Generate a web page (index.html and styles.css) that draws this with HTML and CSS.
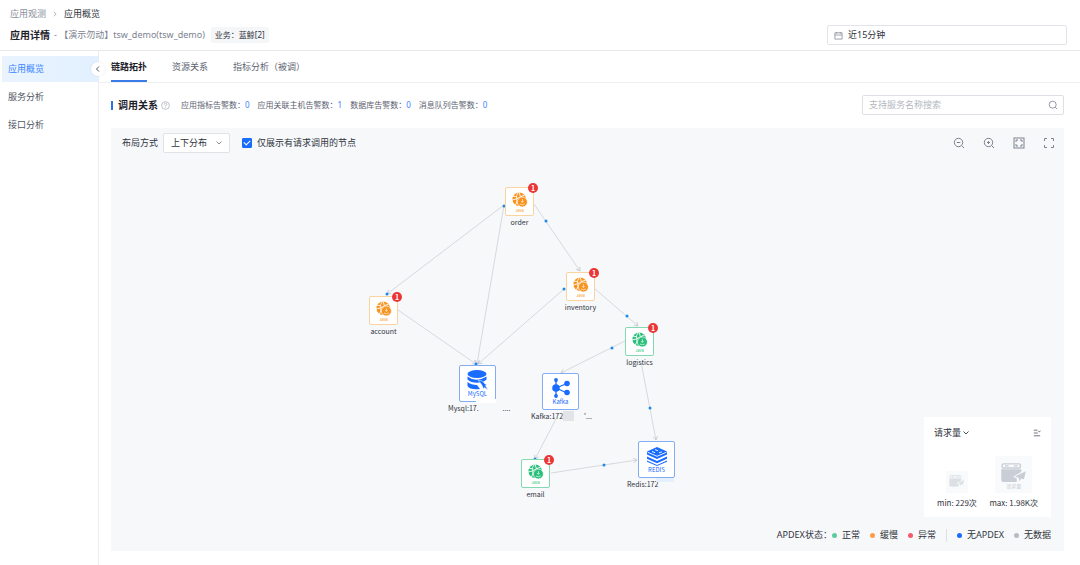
FILE: index.html
```html
<!DOCTYPE html>
<html lang="zh-CN">

<head>
    <meta charset="UTF-8">
    <title>应用概览</title>
    <link rel="stylesheet" href="styles.css">
</head>

<body>
    <!-- shared icons -->
    <svg class="sprite" aria-hidden="true">
        <symbol id="chevron" viewBox="0 0 8 8">
            <path d="M1.5 2.5 4 5 6.5 2.5" fill="none" stroke="currentColor" stroke-width=".9" />
        </symbol>
        <symbol id="service" viewBox="0 0 20 20">
            <circle cx="9" cy="9" r="8.500" fill="currentColor" />
            <path d="M8 .5Q4.500 4 6 8.500L0 10M6 8.500Q7 12 4 17M6 8.500 10.500 6 16 3.500M10.500 6 9 .5M1 5l4.500 1" fill="none" stroke="#fff" stroke-width="1.100" />
            <circle cx="13" cy="12.500" r="6.300" fill="currentColor" stroke="#fff" stroke-width=".9" />
            <path d="M13 9v4M11.500 11.500 13 13l1.500-1.500M10 15q3 1.800 6 0" fill="none" stroke="#fff" stroke-width=".8" />
        </symbol>
        <symbol id="window" viewBox="0 0 28 22">
            <rect x="1" y="1" width="20" height="4.500" rx="1" fill="none" stroke="currentColor" stroke-width="1.500" />
            <path d="M4 3.200h4M14 3.200h4" stroke="currentColor" stroke-width="1.500" />
            <path d="M0 7h22v3l-9 5 4 2v4H2q-2 0-2-2z" fill="currentColor" />
            <path d="M27 9 15 15l4 1 1 4 2-3 3 1z" fill="currentColor" />
        </symbol>
    </svg>

    <header class="header">
        <div class="header-left">
            <nav class="breadcrumb">
                <a href="#">应用观测</a>
                <svg class="crumb-arrow" viewBox="0 0 8 8"><path d="M2.500 1 5.500 4 2.500 7" /></svg>
                <span class="current">应用概览</span>
            </nav>
            <div class="title-row">
                <h1>应用详情</h1>
                <span class="app-name">- 【演示勿动】tsw_demo(tsw_demo)</span>
                <span class="tag">业务：蓝鲸[2]</span>
            </div>
        </div>
        <label class="time-picker">
            <svg viewBox="0 0 10 10"><path d="M1 2h8v7H1zM1 4.500h8M3 1v2M7 1v2" /></svg>
            <input type="text" value="近15分钟" aria-label="时间范围" readonly>
        </label>
    </header>

    <div class="body">
        <aside class="sidebar">
            <a class="active" href="#">应用概览</a>
            <a href="#">服务分析</a>
            <a href="#">接口分析</a>
            <button class="collapse" aria-label="收起菜单">
                <svg viewBox="0 0 8 8"><path d="M5 1.500 2.500 4 5 6.500" /></svg>
            </button>
        </aside>

        <main class="main">
            <nav class="tabs">
                <a class="active" href="#">链路拓扑</a>
                <a href="#">资源关系</a>
                <a href="#">指标分析（被调）</a>
            </nav>

            <section class="content">
                <div class="section-head">
                    <h2>调用关系</h2>
                    <svg class="help" viewBox="0 0 10 10">
                        <circle cx="5" cy="5" r="4.300" />
                        <path d="M3.600 4q0-1.500 1.400-1.500T6.400 4Q6.400 4.800 5 5.300V6M5 6.800v.8" />
                    </svg>
                    <ul class="alerts">
                        <li>应用指标告警数：<a href="#">0</a></li>
                        <li>应用关联主机告警数：<a href="#">1</a></li>
                        <li>数据库告警数：<a href="#">0</a></li>
                        <li>消息队列告警数：<a href="#">0</a></li>
                    </ul>
                    <label class="search">
                        <input type="search" placeholder="支持服务名称搜索" aria-label="搜索服务">
                        <svg viewBox="0 0 10 10"><circle cx="4.700" cy="4.700" r="3.500" /><path d="M7.300 7.300 9 9" /></svg>
                    </label>
                </div>

                <div class="canvas">
                    <div class="toolbar">
                        <label for="layout">布局方式</label>
                        <span class="select">
                            <select id="layout">
                                <option>上下分布</option>
                                <option>左右分布</option>
                            </select>
                            <svg><use href="#chevron" /></svg>
                        </span>
                        <label class="check">
                            <input type="checkbox" checked>
                            仅展示有请求调用的节点
                        </label>
                        <div class="tools">
                            <button aria-label="缩小"><svg viewBox="0 0 12 12"><circle cx="5.500" cy="5.500" r="4.200" /><path d="M8.700 8.700 11 11M3.700 5.500h3.600" /></svg></button>
                            <button aria-label="放大"><svg viewBox="0 0 12 12"><circle cx="5.500" cy="5.500" r="4.200" /><path d="M8.700 8.700 11 11M4 5.500h3M5.500 4v3" /></svg></button>
                            <button aria-label="适应画布"><svg viewBox="0 0 12 12"><rect x="1" y="1" width="10" height="10" /><path d="M3 5V3h2M7 3h2v2M9 7v2H7M5 9H3V7" /></svg></button>
                            <button aria-label="全屏"><svg viewBox="0 0 12 12"><path d="M1.500 4V1.500H4M8 1.500h2.500V4M10.500 8v2.500H8M4 10.500H1.500V8" /></svg></button>
                        </div>
                    </div>

                    <div class="graph">
                        <svg class="edges" viewBox="0 0 600 400">
                            <defs>
                                <marker id="arrow" viewBox="0 0 6 6" refX="5" refY="3" markerWidth="6" markerHeight="6" orient="auto">
                                    <path d="M1 .5 5 3 1 5.500" fill="none" stroke="#bfc4cc" stroke-width=".8" />
                                </marker>
                            </defs>
                            <g class="lines">
                                <path d="M393 77 276 166" />
                                <path d="M393 77 366 236" />
                                <path d="M423 76 469 143" />
                                <path d="M453 161 367 236" />
                                <path d="M287 182 365 236" />
                                <path d="M484 161 527 198" />
                                <path d="M514 213 450 245" />
                                <path d="M530 234 545 312" />
                                <path d="M445 291 424 331" />
                                <path d="M440 345 526 332" />
                            </g>
                            <g class="dots">
                                <circle cx="393" cy="78" r="1.500" />
                                <circle cx="435" cy="93" r="1.500" />
                                <circle cx="453" cy="161" r="1.500" />
                                <circle cx="276" cy="166" r="1.500" />
                                <circle cx="516" cy="188" r="1.500" />
                                <circle cx="501" cy="220" r="1.500" />
                                <circle cx="365" cy="236" r="1.500" />
                                <circle cx="539" cy="280" r="1.500" />
                                <circle cx="424" cy="331" r="1.500" />
                                <circle cx="493" cy="337" r="1.500" />
                            </g>
                        </svg>

                        <div class="node slow order">
                            <div class="box"><svg><use href="#service" /></svg><small>Java</small><b>1</b></div>
                            <span>order</span>
                        </div>
                        <div class="node slow inventory">
                            <div class="box"><svg><use href="#service" /></svg><small>Java</small><b>1</b></div>
                            <span>inventory</span>
                        </div>
                        <div class="node slow account">
                            <div class="box"><svg><use href="#service" /></svg><small>Java</small><b>1</b></div>
                            <span>account</span>
                        </div>
                        <div class="node normal logistics">
                            <div class="box"><svg><use href="#service" /></svg><small>Java</small><b>1</b></div>
                            <span>logistics</span>
                        </div>
                        <div class="node normal email">
                            <div class="box"><svg><use href="#service" /></svg><small>Java</small><b>1</b></div>
                            <span>email</span>
                        </div>
                        <div class="node large mysql">
                            <div class="box">
                                <svg viewBox="0 0 22 20">
                                    <ellipse cx="10" cy="4" rx="9.500" ry="4" fill="currentColor" />
                                    <path d="M.5 6.500Q5 10 10 9.700T19.500 6.500v3q-3.500 3.200-9.500 3.200T.5 9.500zM.5 12q3.500 3 9.500 3l3 4q-10 1-12.500-3z" fill="currentColor" />
                                    <path d="M11 10q5 0 7 4l2 .5-1.500 1L21 20l-3.500-2.500-1 1.500q-1-4-5.500-9z" fill="currentColor" stroke="#fff" stroke-width=".5" />
                                </svg>
                                <small>MySQL</small>
                            </div>
                            <span>Mysql:17. <i class="rest">....</i></span>
                        </div>
                        <div class="node large kafka">
                            <div class="box">
                                <svg viewBox="0 0 22 20">
                                    <path d="M6 3v14M6 10l11-4.500M6 10l11 5" stroke="currentColor" stroke-width="1.300" />
                                    <g fill="currentColor">
                                        <circle cx="6" cy="10" r="3.800" />
                                        <circle cx="6" cy="2" r="1.900" />
                                        <circle cx="6" cy="18" r="1.900" />
                                        <circle cx="17" cy="5.500" r="2.800" />
                                        <circle cx="17" cy="14.500" r="2.800" />
                                    </g>
                                </svg>
                                <small>Kafka</small>
                            </div>
                            <span>Kafka:172<i class="mask"></i><i class="rest">'...</i></span>
                        </div>
                        <div class="node large redis">
                            <div class="box">
                                <svg viewBox="0 0 22 20">
                                    <path d="M1 5.500 11 1l10 4.500v3L11 13 1 8.500z" fill="currentColor" />
                                    <path d="M1 10.500 11 15l10-4.500v2.300L11 17.300 1 12.800zM1 14.500 11 19l10-4.500v1.300l-10 4.200-10-4.200z" fill="currentColor" />
                                    <path d="M1.500 6.200 11 10.300l9.500-4.100M6 5.500l3 1.200M9 3.700l3 1M13 6.800l3-1" fill="none" stroke="#fff" stroke-width=".9" />
                                </svg>
                                <small>REDIS</small>
                            </div>
                            <span>Redis:172</span>
                        </div>
                    </div>

                    <div class="canvas-foot">
                        <div class="size-panel">
                            <div class="panel-head">
                                <span class="metric">
                                    <select aria-label="指标">
                                        <option>请求量</option>
                                    </select>
                                    <svg><use href="#chevron" /></svg>
                                </span>
                                <button aria-label="收起图例"><svg viewBox="0 0 10 10"><path d="M1 1.500h4.500M1 5h5M1 8.500h8M6.500 2.500l1.300 1.300L9.500 2" /></svg></button>
                            </div>
                            <div class="sizes">
                                <div class="size">
                                    <div class="thumb small"><svg><use href="#window" /></svg></div>
                                    <span>min: 229次</span>
                                </div>
                                <div class="size">
                                    <div class="thumb"><svg><use href="#window" /></svg><small>请求量</small></div>
                                    <span>max: 1.98K次</span>
                                </div>
                            </div>
                        </div>
                        <ul class="legend">
                            <li>APDEX状态：</li>
                            <li class="item green">正常</li>
                            <li class="item orange">缓慢</li>
                            <li class="item red">异常</li>
                            <li class="divider"></li>
                            <li class="item blue">无APDEX</li>
                            <li class="item gray">无数据</li>
                        </ul>
                    </div>
                </div>
            </section>
        </main>
    </div>
</body>

</html>
```

FILE: styles.css
```css
* {
    box-sizing: border-box;
}

body {
    margin: 0;
    min-height: 100vh;
    display: flex;
    flex-direction: column;
    background: #fff;
    color: #30343d;
    font-family: "Noto Sans", "Noto Sans CJK SC", sans-serif;
    font-size: 9px;
    line-height: 14px;
}

a {
    color: inherit;
    text-decoration: none;
}

h1, h2, ul {
    margin: 0;
    padding: 0;
    list-style: none;
}

button, input, select {
    margin: 0;
    padding: 0;
    border: none;
    background: none;
    color: inherit;
    font: inherit;
    outline: none;
    appearance: none;
}

svg {
    display: block;
    flex: none;
}

.sprite {
    position: absolute;
    width: 0;
    height: 0;
}

/* header */
.header {
    display: flex;
    justify-content: space-between;
    align-items: flex-end;
    padding: 7px 13px 5px 10px;
    border-bottom: 1px solid #e6e8ec;
}

.header-left {
    padding-bottom: 2px;
}

.breadcrumb, .title-row {
    display: flex;
    align-items: center;
}

.breadcrumb {
    gap: 6px;
    color: #8a909c;
}

.breadcrumb .current {
    color: #30343d;
}

.crumb-arrow {
    width: 6px;
    height: 6px;
    fill: none;
    stroke: #9aa0aa;
}

.title-row {
    margin-top: 6px;
    gap: 4px;
    height: 16px;
}

h1, h2 {
    font-size: 10px;
    font-weight: 600;
    color: #1c2029;
}

.app-name {
    color: #7c828f;
}

.tag {
    margin-left: 2px;
    padding: 0 4px;
    font-size: 8px;
    line-height: 16px;
    border-radius: 2px;
    background: #f5f6f8;
}

.time-picker {
    display: flex;
    align-items: center;
    gap: 5px;
    width: 240px;
    height: 20px;
    padding: 0 6px;
    border: 1px solid #e2e4e9;
    border-radius: 2px;
}

.time-picker svg {
    width: 9px;
    height: 9px;
    fill: none;
    stroke: #7c828f;
    stroke-width: .8;
}

.time-picker input {
    flex: 1;
    min-width: 0;
}

/* sidebar */
.body {
    flex: 1;
    display: flex;
}

.sidebar {
    position: relative;
    width: 99px;
    padding: 5px 0 0 2px;
    border-right: 1px solid #eaecf0;
}

.sidebar a {
    display: block;
    margin-bottom: 2px;
    padding-left: 6px;
    line-height: 26px;
    color: #4f5563;
}

.sidebar .active {
    background: linear-gradient(90deg, #e9f4ff, #e2f0ff);
    color: #3a84ff;
}

.collapse {
    position: absolute;
    top: 11px;
    right: -7px;
    width: 14px;
    height: 14px;
    padding: 3px;
    border-radius: 50%;
    background: #fff;
    box-shadow: 0 0 2px rgba(0, 0, 0, .1);
}

.collapse svg {
    width: 8px;
    height: 8px;
    fill: none;
    stroke: #4f5563;
}

/* main */
.main {
    flex: 1;
    min-width: 0;
    display: flex;
    flex-direction: column;
}

.tabs {
    display: flex;
    gap: 25px;
    padding: 2px 0 0 12px;
    border-bottom: 1px solid #eef0f3;
    color: #5c6270;
}

.tabs a {
    line-height: 28px;
    border-bottom: 1px solid transparent;
}

.tabs .active {
    color: #1c2029;
    font-weight: 600;
    border-color: #3a7bea;
    box-shadow: inset 0 -1px #3a7bea;
}

.content {
    flex: 1;
    display: flex;
    flex-direction: column;
    padding: 12px 16px 14px 12px;
}

.section-head {
    display: flex;
    align-items: center;
    height: 20px;
    margin-bottom: 13px;
}

.section-head h2 {
    padding-left: 5px;
    line-height: 9px;
    border-left: 2px solid #2c6fe8;
}

.help {
    width: 9px;
    height: 9px;
    margin: 0 11px 0 3px;
    fill: none;
    stroke: #a6abb5;
    stroke-width: .8;
}

.alerts {
    display: flex;
    gap: 8px;
    font-size: 8px;
    color: #5c6270;
}

.alerts a {
    color: #3a84ff;
}

.search {
    display: flex;
    align-items: center;
    width: 202px;
    height: 20px;
    margin-left: auto;
    padding: 0 5px 0 6px;
    border: 1px solid #dcdfe5;
    border-radius: 2px;
}

.search input {
    flex: 1;
    min-width: 0;
}

.search input::placeholder {
    color: #b4b8c0;
}

.search svg {
    width: 10px;
    height: 10px;
    fill: none;
    stroke: #7c828f;
    stroke-width: .8;
}

/* topology canvas */
.canvas {
    flex: 1;
    position: relative;
    display: flex;
    flex-direction: column;
    justify-content: space-between;
    background: #f6f8fa;
}

.toolbar {
    display: flex;
    align-items: center;
    padding: 5px 9px 0 11px;
}

.select {
    position: relative;
    display: flex;
    margin: 0 12px 0 5px;
}

.select select {
    width: 67px;
    height: 20px;
    padding: 0 7px;
    border: 1px solid #e0e2e8;
    border-radius: 2px;
    background: #fff;
}

.select svg {
    position: absolute;
    top: 6px;
    right: 7px;
    width: 8px;
    height: 8px;
    color: #7c828f;
    pointer-events: none;
}

.check {
    display: flex;
    align-items: center;
    gap: 5px;
}

.check input {
    display: grid;
    place-items: center;
    width: 10px;
    height: 10px;
    border: 1px solid #1a6cff;
    border-radius: 1px;
}

.check input:checked {
    background: #1a6cff;
}

.check input:checked::after {
    content: "";
    width: 5px;
    height: 3px;
    margin-bottom: 2px;
    border: solid #fff;
    border-width: 0 0 1px 1px;
    transform: rotate(-45deg);
}

.tools {
    display: flex;
    gap: 18px;
    margin-left: auto;
}

.tools svg {
    width: 12px;
    height: 12px;
    fill: none;
    stroke: #7c8290;
}

.graph {
    position: absolute;
    top: 0;
    left: 0;
    pointer-events: none;
    font-family: "Noto Sans CJK SC", sans-serif;
}

.edges {
    width: 600px;
    height: 400px;
}

.lines {
    fill: none;
    stroke: #d2d5da;
    stroke-width: .9;
}

.lines path {
    marker-end: url(#arrow);
}

.dots {
    fill: #2089e8;
}

.node {
    position: absolute;
    display: flex;
    flex-direction: column;
    align-items: center;
    width: 29px;
    font-size: 7px;
    line-height: 12px;
    white-space: nowrap;
    pointer-events: auto;
}

.box {
    position: relative;
    display: flex;
    flex-direction: column;
    align-items: center;
    width: 29px;
    height: 29px;
    padding-top: 4px;
    border: 1px solid;
    border-radius: 2px;
    background: #fff;
}

.box svg {
    width: 16px;
    height: 16px;
}

.box small {
    font-size: 4px;
    line-height: 4px;
}

.box b {
    position: absolute;
    top: -5px;
    right: -5px;
    width: 10px;
    height: 10px;
    border-radius: 50%;
    background: #ea3636;
    color: #fff;
    font-size: 7px;
    line-height: 10px;
    text-align: center;
}

.slow .box {
    border-color: #fbd3a0;
    color: #f7931e;
}

.normal .box {
    border-color: #83d9b1;
    color: #2cbf7b;
}

.large, .large .box {
    width: 37px;
}

.large .box {
    height: 37px;
    border-color: #82adf5;
    color: #1a6cff;
}

.large svg {
    width: 22px;
    height: 20px;
}

.large small {
    font-size: 6px;
    line-height: 8px;
}

.large > span {
    display: flex;
    align-items: center;
    align-self: flex-start;
    margin-left: -11px;
}

.rest {
    margin-left: 24px;
    font-style: normal;
}

.mask {
    width: 11px;
    height: 10px;
    background: #e2e4e7;
}

.mask + .rest {
    margin-left: 10px;
}

/* hidden part of the address */
.mysql .box::after {
    content: "";
    position: absolute;
    right: -1px;
    bottom: -2px;
    width: 20px;
    height: 4px;
    background: #fff;
}

.redis .box::after {
    content: "";
    position: absolute;
    right: 0;
    bottom: -5px;
    width: 18px;
    height: 4px;
    background: #e6effc;
}

.order { left: 394px; top: 59px; }
.inventory { left: 455px; top: 144px; }
.account { left: 258px; top: 168px; }
.logistics { left: 514px; top: 199px; }
.email { left: 410px; top: 331px; }
.mysql { left: 348px; top: 237px; }
.kafka { left: 431px; top: 245px; }
.redis { left: 527px; top: 313px; }

/* size panel and legend */
.canvas-foot {
    position: relative;
    display: flex;
    flex-direction: column;
    align-items: flex-end;
    gap: 11px;
    padding: 0 13px 9px 0;
}

.size-panel {
    width: 127px;
    height: 100px;
    padding: 9px 10px;
    background: #fff;
}

.panel-head {
    display: flex;
    justify-content: space-between;
    align-items: center;
}

.metric {
    display: flex;
    align-items: center;
}

.panel-head svg {
    width: 8px;
    height: 8px;
    fill: none;
    stroke: #4f5563;
}

.sizes {
    display: flex;
    justify-content: space-between;
    align-items: flex-end;
    margin: 16px 3px 0;
    font-size: 8px;
    font-family: "Noto Sans CJK SC", sans-serif;
}

.size {
    display: flex;
    flex-direction: column;
    align-items: center;
    gap: 3px;
    white-space: nowrap;
}

.thumb {
    display: flex;
    flex-direction: column;
    align-items: center;
    width: 37px;
    height: 37px;
    padding-top: 7px;
    background: #f9fafb;
    color: #c9cdd5;
}

.thumb svg {
    width: 26px;
    height: 20px;
}

.thumb small {
    font-size: 5px;
    line-height: 6px;
}

.thumb.small {
    width: 22px;
    height: 22px;
    padding-top: 4px;
    color: #dcdfe4;
}

.small svg {
    width: 16px;
    height: 12px;
}

.legend {
    display: flex;
    align-items: center;
    gap: 10px;
}

.legend .item {
    display: flex;
    align-items: center;
    gap: 5px;
}

.legend li:first-child {
    margin-right: -10px;
}

.item::before {
    content: "";
    width: 5px;
    height: 5px;
    border-radius: 50%;
    background: currentColor;
}

.green::before { background: #5fcb9f; }
.orange::before { background: #ff9c4a; }
.red::before { background: #f55a6c; }
.blue::before { background: #1a6cff; }
.gray::before { background: #b8bbc2; }

.divider {
    width: 1px;
    height: 13px;
    background: #dcdfe5;
}
```
